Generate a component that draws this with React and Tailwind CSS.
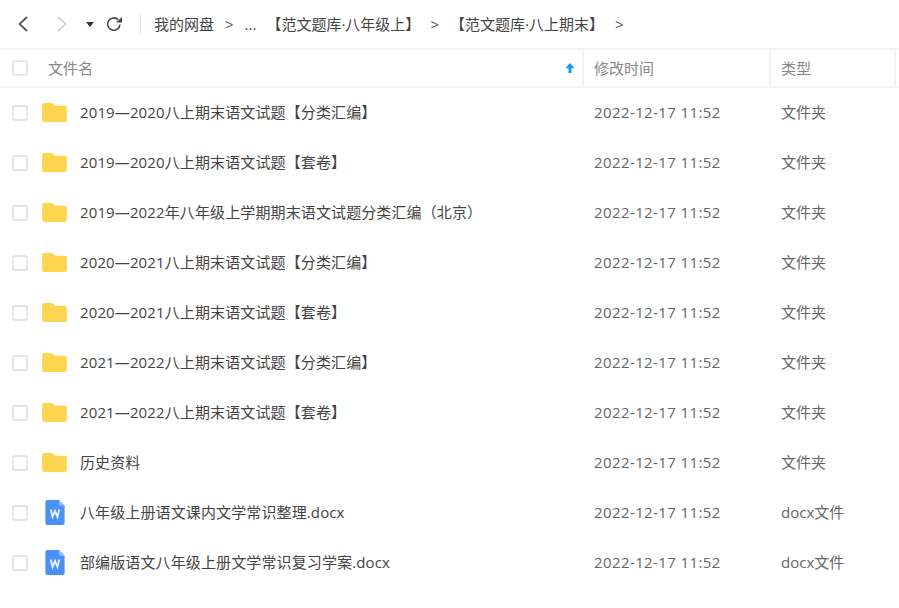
import React from 'react';

const fontStack = { fontFamily: '"Open Sans", "Noto Sans CJK SC", sans-serif' };

const rows = [
  { name: '2019—2020八上期末语文试题【分类汇编】', type: '文件夹' },
  { name: '2019—2020八上期末语文试题【套卷】', type: '文件夹' },
  { name: '2019—2022年八年级上学期期末语文试题分类汇编（北京）', type: '文件夹' },
  { name: '2020—2021八上期末语文试题【分类汇编】', type: '文件夹' },
  { name: '2020—2021八上期末语文试题【套卷】', type: '文件夹' },
  { name: '2021—2022八上期末语文试题【分类汇编】', type: '文件夹' },
  { name: '2021—2022八上期末语文试题【套卷】', type: '文件夹' },
  { name: '历史资料', type: '文件夹' },
  { name: '八年级上册语文课内文学常识整理.docx', type: 'docx文件', doc: true },
  { name: '部编版语文八年级上册文学常识复习学案.docx', type: 'docx文件', doc: true },
];

const Checkbox = () => (
  <div className="w-4 h-4 rounded-[3px] border-2 border-[#e6e6e6] bg-white shrink-0" />
);

const FolderIcon = () => (
  <svg width="25" height="19" viewBox="0 0 26 20" className="shrink-0 mb-[2px]">
    <path d="M2 0h7.5c1 0 1.6.4 2.2 1.1L13.5 3H24a2 2 0 0 1 2 2v13a2 2 0 0 1-2 2H2a2 2 0 0 1-2-2V2a2 2 0 0 1 2-2z" fill="#ffd54f" />
  </svg>
);

const DocIcon = () => (
  <svg width="20" height="25" viewBox="0 0 20 26" className="shrink-0 mb-[2px] ml-[1px]">
    <path d="M2 0h12l6 6V24a2 2 0 0 1-2 2H2a2 2 0 0 1-2-2V2a2 2 0 0 1 2-2z" fill="#4a90f5" />
    <path d="M14 0l6 6h-4a2 2 0 0 1-2-2z" fill="#8ab8fa" />
    <path d="M5.5 10l2 7.5L10 11.5l2.500 6 2-7.5" fill="none" stroke="#e3eeff" strokeWidth="2" />
  </svg>
);

const Sep = () => <span className="text-[#555] text-[15px]">&gt;</span>;

export default function App() {
  return (
    <div className="w-[899px] h-[608px] bg-white overflow-hidden text-[15px] text-[#444]" style={fontStack}>
      {/* toolbar */}
      <div className="h-[50px] flex items-center border-b-2 border-[#f2f2f2]">
        <svg width="10" height="16" viewBox="0 0 10 16" className="ml-[18px]">
          <path d="M9 1L1.5 8 9 15" fill="none" stroke="#555" strokeWidth="1.8" />
        </svg>
        <svg width="10" height="16" viewBox="0 0 10 16" className="ml-[29px]">
          <path d="M1 1l7.5 7L1 15" fill="none" stroke="#c8c8c8" strokeWidth="1.5" />
        </svg>
        <svg width="8" height="5" viewBox="0 0 8 5" className="ml-[19px]">
          <path d="M0 0h8L4 5z" fill="#333" />
        </svg>
        <svg width="16" height="16" viewBox="0 0 16 16" className="ml-[12px]">
          <path d="M14 8.5a6.2 6.2 0 1 1-1.8-4.8" fill="none" stroke="#444" strokeWidth="1.6" />
          <path d="M10 6.5h6V1z" fill="#444" />
        </svg>
        <div className="w-px h-5 bg-[#e6e6e6] ml-[18px]" />
        <div className="flex items-center ml-[13px] whitespace-nowrap">
          <span>我的网盘</span>
          <span className="ml-[11px]"><Sep /></span>
          <span className="ml-[11px]">...</span>
          <span className="ml-[10px]">【范文题库·八年级上】</span>
          <span className="ml-[10px]"><Sep /></span>
          <span className="ml-[11px]">【范文题库·八上期末】</span>
          <span className="ml-[11px]"><Sep /></span>
        </div>
      </div>

      {/* table header */}
      <div className="h-[38px] flex items-center border-b-2 border-[#f5f5f5] text-[#888]">
        <div className="w-[584px] h-full flex items-center border-r-2 border-[#f2f2f2] shrink-0">
          <div className="ml-[12px]"><Checkbox /></div>
          <span className="ml-[20px]">文件名</span>
          <svg width="10" height="10" viewBox="0 0 10 10" className="ml-auto mr-[7px]">
            <path d="M5 0l4.5 5.2H6.4V10H3.6V5.2H.5z" fill="#0a9bf5" />
          </svg>
        </div>
        <div className="w-[187px] h-full flex items-center pl-[10px] border-r-2 border-[#f2f2f2] shrink-0">修改时间</div>
        <div className="w-[125px] h-full flex items-center pl-[10px] border-r-2 border-[#f2f2f2] shrink-0">类型</div>
      </div>

      {/* rows */}
      {rows.map((row) => (
        <div key={row.name} className="h-[50px] flex items-center">
          <div className="w-[584px] flex items-center shrink-0">
            <div className="ml-[12px]"><Checkbox /></div>
            <div className="w-[26px] ml-[13px] flex justify-center">{row.doc ? <DocIcon /> : <FolderIcon />}</div>
            <span className="ml-[13px] whitespace-nowrap tracking-[0.12px] pb-[2px]">{row.name}</span>
          </div>
          <div className="w-[187px] pl-[10px] shrink-0 text-[#666] tracking-[0.4px] pb-[2px]">2022-12-17 11:52</div>
          <div className="pl-[10px] text-[#666] pb-[2px]">{row.type}</div>
        </div>
      ))}
    </div>
  );
}
